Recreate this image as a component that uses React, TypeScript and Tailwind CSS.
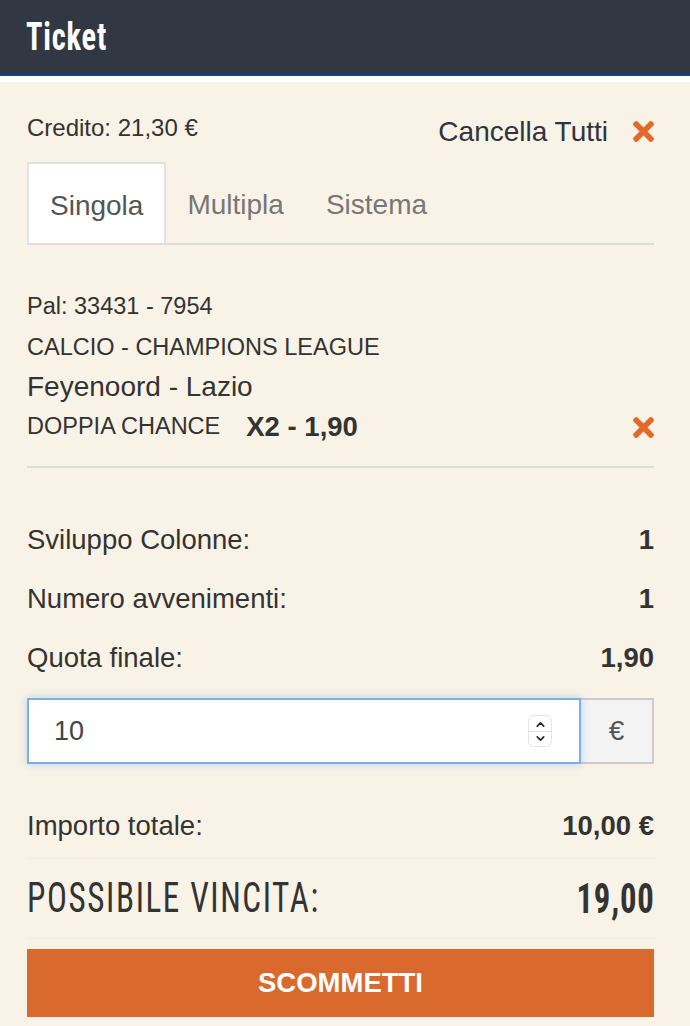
import React, { FC } from "react";
import { FaTimes } from "react-icons/fa";
import { ChevronUp, ChevronDown } from "lucide-react";
import clsx from "clsx";

const narrow = "font-['Roboto_Condensed','Liberation_Sans_Narrow','DejaVu_Sans_Condensed',sans-serif]";

interface ISummaryRow {
  label: string;
  value: string;
}

const SummaryRow: FC<ISummaryRow> = ({ label, value }) => (
  <div className="flex h-[59px] items-center justify-between text-[27.5px]">
    <span>{label}</span>
    <span className="font-bold">{value}</span>
  </div>
);

const RemoveIcon = () => (
  <FaTimes className="text-[#e0692b]" style={{ width: 21, height: 31 }} />
);

const tabs = ["Singola", "Multipla", "Sistema"];

const App = () => {
  const active = "Singola";

  return (
    <div className="min-h-screen bg-[#f9f2e6] font-['Liberation_Sans',Arial,sans-serif] text-[#333]">
      <header className="flex h-[76px] items-center border-b-[3px] border-[#1d3c79] bg-[#313844] px-[26px]">
        <h1
          className={clsx(
            narrow,
            "inline-block origin-left scale-x-[0.8] text-[38px] font-bold leading-none tracking-[1px] text-white"
          )}
        >
          Ticket
        </h1>
      </header>
      <div className="h-[6px] bg-white" />

      <div className="pl-[27px] pr-[36px] pt-[32px] pb-[10px]">
        {/* credito + cancella */}
        <div className="flex items-start justify-between">
          <span className="text-[24px] leading-[28px]">Credito: 21,30 €</span>
          <div className="flex h-[34px] items-center gap-[25px]">
            <span className="mt-[2px] text-[28px] leading-[32px] text-[#2e3440]">
              Cancella Tutti
            </span>
            <RemoveIcon />
          </div>
        </div>

        {/* tabs */}
        <div className="mt-[14px] flex border-b-2 border-[#ddd]">
          {tabs.map((tab) => (
            <div
              key={tab}
              className={clsx(
                "flex h-[81px] items-center px-[21px] pt-[4px] text-[28px]",
                tab === active
                  ? "border-2 border-b-0 border-[#e2e2e2] bg-white text-[#555]"
                  : "text-[#777]"
              )}
            >
              {tab}
            </div>
          ))}
        </div>

        {/* event */}
        <div className="mt-[41px]">
          <div className="flex h-[41px] items-center text-[23.5px]">Pal: 33431 - 7954</div>
          <div className="flex h-[41px] items-center text-[23.5px]">
            CALCIO - CHAMPIONS LEAGUE
          </div>
          <div className="flex h-[37px] items-center text-[28px]">Feyenoord - Lazio</div>
          <div className="flex h-[44px] items-center justify-between">
            <div className="flex items-center">
              <span className="text-[23.5px]">DOPPIA CHANCE</span>
              <span className="ml-[26px] text-[27.5px] font-bold">X2 - 1,90</span>
            </div>
            <RemoveIcon />
          </div>
        </div>
        <div className="mt-[17px] h-[2px] bg-[#ddd]" />

        {/* summary */}
        <div className="mt-[42px]">
          <SummaryRow label="Sviluppo Colonne:" value="1" />
          <SummaryRow label="Numero avvenimenti:" value="1" />
          <SummaryRow label="Quota finale:" value="1,90" />
        </div>

        {/* stake */}
        <div className="mt-[11px] flex h-[66px]">
          <div className="relative flex flex-1 items-center border-2 border-[#7cafe6] bg-white pl-[25px] shadow-[0_0_8px_rgba(102,175,233,0.45)]">
            <span className="text-[27px] text-[#444]">10</span>
            <div className="absolute right-[27px] top-1/2 flex h-[32px] w-[24px] -translate-y-1/2 flex-col items-center justify-center rounded-[6px] border border-[#e4e4e4] bg-white">
              <ChevronUp size={13} strokeWidth={3} className="text-[#222]" />
              <div className="h-px w-full bg-[#e4e4e4]" />
              <ChevronDown size={13} strokeWidth={3} className="text-[#222]" />
            </div>
          </div>
          <div className="flex w-[73px] items-center justify-center border-2 border-l-0 border-[#ccc] bg-[#f3f3f3] text-[28px] text-[#555]">
            €
          </div>
        </div>

        <div className="mt-[32px]">
          <SummaryRow label="Importo totale:" value="10,00 €" />
        </div>
        <div className="mt-[2px] h-[2px] bg-[#f2f0ec]" />

        <div className={clsx(narrow, "flex h-[78px] items-center justify-between text-[#333]")}>
          <span className="inline-block origin-left scale-x-[0.79] text-[42px] leading-none tracking-[2px]">
            POSSIBILE VINCITA:
          </span>
          <span className="inline-block origin-right scale-x-[0.76] text-[43px] font-bold leading-none tracking-[1px]">
            19,00
          </span>
        </div>
        <div className="h-[2px] bg-[#f2f0ec]" />

        <button className="mt-[10px] flex h-[68px] w-full items-center justify-center bg-[#d9692c] text-[27.5px] font-bold text-white">
          SCOMMETTI
        </button>
      </div>
    </div>
  );
};

export default App;
